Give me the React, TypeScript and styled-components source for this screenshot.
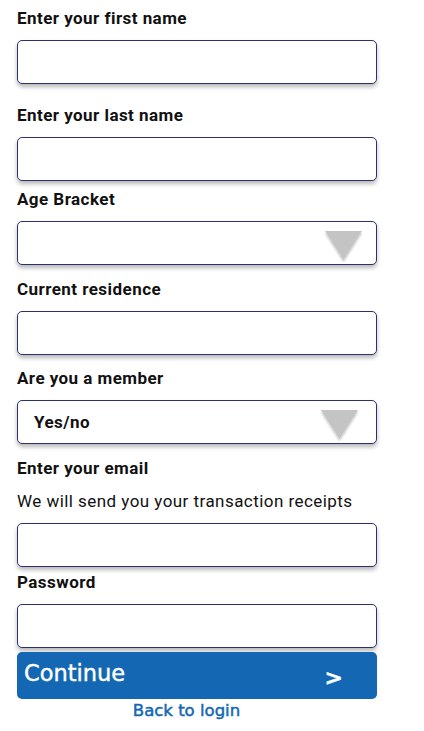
import React from 'react';
import styled, { createGlobalStyle } from 'styled-components';

const GlobalStyle = createGlobalStyle`
  body {
    margin: 0;
    background: #ffffff;
    font-family: Roboto, 'Liberation Sans', sans-serif;
  }
`;

const colors = {
  text: '#111111',
  border: '#2b316e',
  blue: '#1468b3',
  arrow: '#c4c4c4',
};

const Page = styled.form`
  display: flex;
  flex-direction: column;
  width: 360px;
  padding: 8px 0 0 17px;
  letter-spacing: 0.45px;
`;

const Label = styled.label<{ $gap?: number; $tight?: boolean }>`
  display: block;
  margin-top: ${(p) => p.$gap ?? 0}px;
  margin-bottom: ${(p) => (p.$tight ? 0 : 12)}px;
  font-size: 17px;
  line-height: 20px;
  font-weight: 700;
  color: ${colors.text};
`;

const Hint = styled.p`
  margin: 13px 0 12px;
  font-size: 17px;
  line-height: 20px;
  color: ${colors.text};
`;

const Input = styled.input`
  box-sizing: border-box;
  width: 360px;
  height: 44px;
  margin: 0;
  padding: 0 16px;
  border: 1px solid ${colors.border};
  border-radius: 5px;
  background: #fff;
  box-shadow: 0 3px 4px rgba(0, 0, 0, 0.28);
  font: inherit;
  outline: none;
`;

const Select = styled.div`
  box-sizing: border-box;
  display: flex;
  align-items: center;
  justify-content: space-between;
  width: 360px;
  height: 44px;
  padding: 0 0 0 16px;
  border: 1px solid ${colors.border};
  border-radius: 5px;
  background: #fff;
  box-shadow: 0 3px 4px rgba(0, 0, 0, 0.28);
`;

const SelectValue = styled.span`
  font-size: 17px;
  font-weight: 700;
  color: ${colors.text};
`;

const Arrow = styled.svg<{ $right: number }>`
  align-self: flex-start;
  margin: 8px ${(p) => p.$right}px 0 0;
  overflow: visible;
`;

const Continue = styled.button`
  box-sizing: border-box;
  display: flex;
  align-items: center;
  justify-content: space-between;
  width: 360px;
  height: 47px;
  margin-top: 4px;
  padding: 0 34px 5px 7px;
  border: none;
  border-radius: 5px;
  background: ${colors.blue};
  color: #fff;
  font-family: 'DejaVu Sans', Verdana, sans-serif;
  font-size: 22.5px;
  letter-spacing: 0;
  -webkit-text-stroke: 0.4px #fff;
  cursor: pointer;
`;

const Chevron = styled.span`
  font-weight: 700;
  font-size: 22px;
  padding-top: 8px;
`;

const BackLink = styled.a`
  align-self: center;
  margin: 2px 21px 0 0;
  font-family: 'DejaVu Sans', Verdana, sans-serif;
  font-size: 16.5px;
  line-height: 20px;
  letter-spacing: 0;
  color: ${colors.blue};
  -webkit-text-stroke: 0.5px ${colors.blue};
  text-decoration: none;
`;

const DropArrow: React.FC<{ right: number }> = ({ right }) => (
  <Arrow $right={right} width="38" height="31" viewBox="0 0 38 31">
    <defs>
      <filter id="soft" x="-20%" y="-20%" width="140%" height="150%">
        <feGaussianBlur in="SourceAlpha" stdDeviation="1.2" />
        <feOffset dy="1.5" result="b" />
        <feFlood floodColor="#000" floodOpacity="0.25" />
        <feComposite in2="b" operator="in" />
        <feMerge>
          <feMergeNode />
          <feMergeNode in="SourceGraphic" />
        </feMerge>
      </filter>
    </defs>
    <polygon points="0,1 37,1 18.5,30" fill={colors.arrow} filter="url(#soft)" />
  </Arrow>
);

export default function App() {
  return (
    <>
      <GlobalStyle />
      <Page onSubmit={(e) => e.preventDefault()}>
        <Label>Enter your first name</Label>
        <Input type="text" />

        <Label $gap={21}>Enter your last name</Label>
        <Input type="text" />

        <Label $gap={8}>Age Bracket</Label>
        <Select>
          <SelectValue />
          <DropArrow right={13} />
        </Select>

        <Label $gap={14}>Current residence</Label>
        <Input type="text" />

        <Label $gap={13}>Are you a member</Label>
        <Select>
          <SelectValue>Yes/no</SelectValue>
          <DropArrow right={17} />
        </Select>

        <Label $gap={14} $tight>
          Enter your email
        </Label>
        <Hint>We will send you your transaction receipts</Hint>
        <Input type="email" />

        <Label $gap={5}>Password</Label>
        <Input type="password" />

        <Continue type="submit">
          <span>Continue</span>
          <Chevron>&gt;</Chevron>
        </Continue>
        <BackLink href="#">Back to login</BackLink>
      </Page>
    </>
  );
}
